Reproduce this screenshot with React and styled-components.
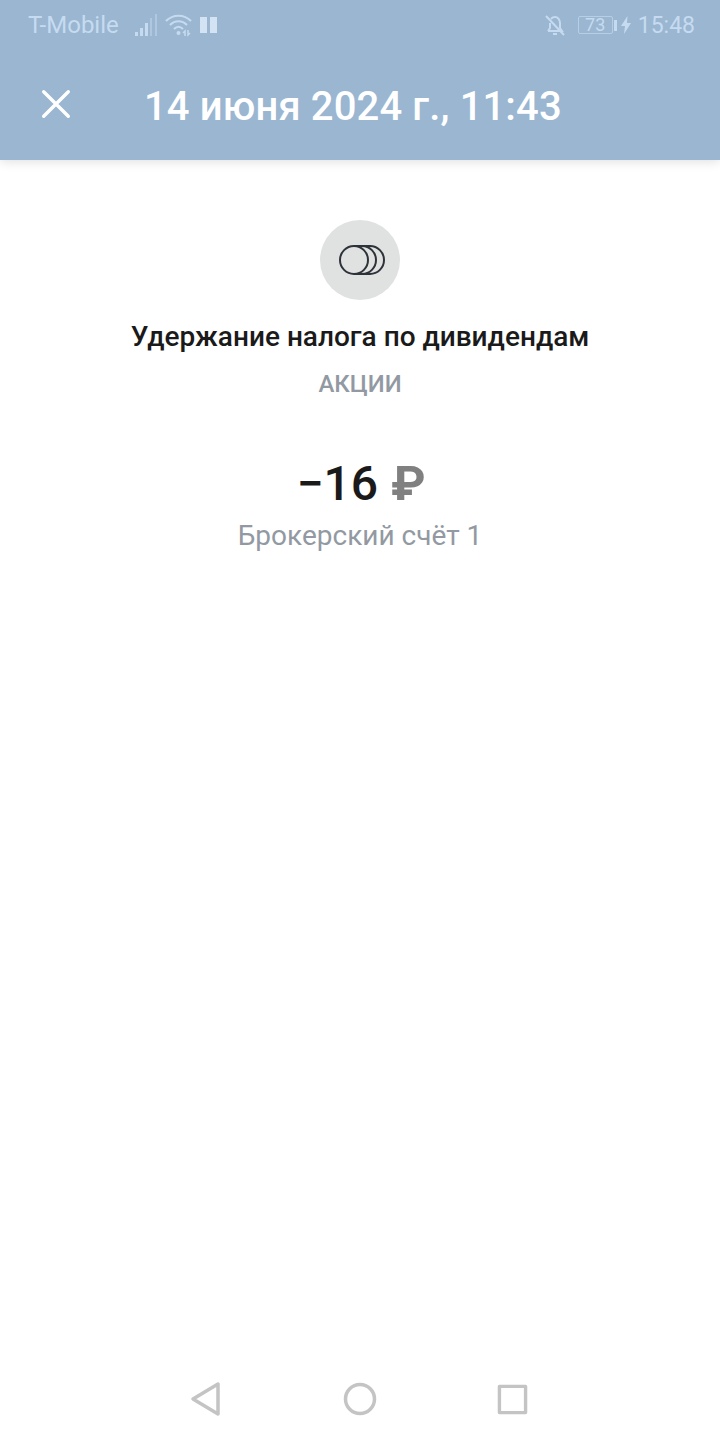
import React from 'react';
import styled, { createGlobalStyle } from 'styled-components';

const GlobalStyle = createGlobalStyle`
  html, body {
    margin: 0;
    padding: 0;
    background: #fff;
    font-family: Roboto, "Liberation Sans", sans-serif;
  }
`;

const Root = styled.div`
  width: 720px;
  height: 1440px;
  display: flex;
  flex-direction: column;
  background: #fff;
  overflow: hidden;
`;

const Header = styled.header`
  height: 160px;
  flex: none;
  background: #9ab6d1;
  box-shadow: 0 2px 10px rgba(0, 0, 0, 0.12);
  position: relative;
  z-index: 1;
`;

const StatusBar = styled.div`
  height: 50px;
  padding: 0 25px 0 28px;
  display: flex;
  align-items: center;
  color: #c6dbf0;
  font-size: 24px;
`;

const Carrier = styled.span`
  margin-right: 16px;
`;

const StatusRight = styled.div`
  margin-left: auto;
  display: flex;
  align-items: center;
`;

const BatteryBox = styled.div`
  width: 33px;
  height: 16px;
  border: 1.5px solid #b7cfe6;
  border-radius: 2px;
  font-size: 18px;
  line-height: 16px;
  text-align: center;
  margin-left: 11px;
`;

const BatteryCap = styled.div`
  width: 3px;
  height: 11px;
  background: #c6dbf0;
  margin-left: 1px;
`;

const Clock = styled.span`
  font-size: 23px;
`;

const Toolbar = styled.div`
  height: 110px;
  padding-bottom: 2px;
  box-sizing: border-box;
  display: flex;
  align-items: center;
  padding-left: 40px;
`;

const Title = styled.h1`
  margin: 4px 0 0 72px;
  color: #fff;
  font-size: 40px;
  font-weight: 500;
  letter-spacing: 0.13px;
`;

const Content = styled.main`
  flex: 1;
  display: flex;
  flex-direction: column;
  align-items: center;
  padding-top: 60px;
`;

const IconCircle = styled.div`
  width: 80px;
  height: 80px;
  border-radius: 50%;
  background: #e0e2e2;
  display: flex;
  align-items: center;
  justify-content: center;
`;

const OperationName = styled.div`
  margin-top: 20px;
  font-size: 28px;
  line-height: 34px;
  font-weight: 500;
  color: #1a1a1a;
`;

const Category = styled.div`
  margin-top: 16px;
  font-size: 24px;
  line-height: 28px;
  font-weight: 500;
  color: #9299a2;
`;

const Amount = styled.div`
  margin-top: 58px;
  padding-left: 2px;
  font-size: 48px;
  line-height: 56px;
  font-weight: 500;
  color: #1a1a1a;
  display: flex;
  align-items: center;
`;

const Currency = styled.span`
  color: #808080;
  margin-left: 13px;
  font-size: 49px;
  font-weight: 700;
`;

const Account = styled.div`
  margin-top: 7px;
  font-size: 28px;
  line-height: 34px;
  color: #9299a2;
`;

const NavBar = styled.nav`
  height: 59px;
  box-sizing: border-box;
  flex: none;
  display: flex;
  align-items: center;
  justify-content: center;
  gap: 120px;
  padding: 0 3px 23px 0;
`;

const App = () => {
  return (
    <Root>
      <GlobalStyle />
      <Header>
        <StatusBar>
          <Carrier>T-Mobile</Carrier>
          <svg width="24" height="24" viewBox="0 0 24 24">
            <rect x="0" y="19" width="3" height="4" fill="#c6dbf0" />
            <rect x="5" y="15" width="3" height="8" fill="#c6dbf0" />
            <rect x="10" y="10" width="3" height="13" fill="#c6dbf0" />
            <rect x="15" y="5" width="2" height="18" fill="#afc8df" />
            <rect x="20" y="1" width="2" height="22" fill="#afc8df" />
          </svg>
          <svg width="28" height="24" viewBox="0 0 28 24" fill="none" stroke="#c6dbf0" strokeWidth="2.2" style={{ marginLeft: 6 }}>
            <path d="M1 8C8 1 19 1 26 8" />
            <path d="M5 12C10 7 17 7 22 12" />
            <path d="M9 16C12 13 15 13 18 16" />
            <circle cx="13.5" cy="20" r="2" fill="#c6dbf0" stroke="none" />
            <path d="M20 23v-5l-2 2M23 17v5l2-2" strokeWidth="1.5" />
          </svg>
          <svg width="18" height="18" viewBox="0 0 18 18" style={{ marginLeft: 7 }}>
            <rect x="0" y="1" width="7" height="16" fill="#d3e3f3" />
            <rect x="10" y="1" width="7" height="16" fill="#d3e3f3" />
          </svg>
          <StatusRight>
            <svg width="24" height="24" viewBox="0 0 24 24" fill="none" stroke="#c6dbf0" strokeWidth="2">
              <path d="M5 18h14l-2-3v-5c0-3-2-6-5-6S9 5 8 6M7 10v5l-2 3" />
              <path d="M10 21h4M3 3l18 19" />
            </svg>
            <BatteryBox>73</BatteryBox>
            <BatteryCap />
            <svg width="12" height="20" viewBox="0 0 12 20" style={{ margin: '0 6px 0 3px' }}>
              <path d="M7.5 1L1 11h4l-1 8 7-11H7z" fill="#c6dbf0" />
            </svg>
            <Clock>15:48</Clock>
          </StatusRight>
        </StatusBar>
        <Toolbar>
          <svg width="32" height="32" viewBox="0 0 32 32" stroke="#fff" strokeWidth="3.4" strokeLinecap="round">
            <path d="M3.700 3.700L28.300 28.300M28.300 3.700L3.700 28.300" />
          </svg>
          <Title>14 июня 2024 г., 11:43</Title>
        </Toolbar>
      </Header>
      <Content>
        <IconCircle>
          <svg width="46" height="30" viewBox="0 0 46 30" fill="none" stroke="#2e333a" strokeWidth="2" style={{ marginLeft: 3 }}>
            <circle cx="15" cy="15" r="14" />
            <path d="M15 1h8a14 14 0 0 1 0 28h-8" />
            <path d="M23 1h8a14 14 0 0 1 0 28h-8" />
          </svg>
        </IconCircle>
        <OperationName>Удержание налога по дивидендам</OperationName>
        <Category>АКЦИИ</Category>
        <Amount>
          −16
          <Currency>₽</Currency>
        </Amount>
        <Account>Брокерский счёт 1</Account>
      </Content>
      <NavBar>
        <svg width="34" height="36" viewBox="0 0 34 36" fill="none" stroke="#c4c4c4" strokeWidth="3.5" strokeLinejoin="round">
          <path d="M29 3V33L4 18Z" />
        </svg>
        <svg width="34" height="34" viewBox="0 0 34 34" fill="none" stroke="#c4c4c4" strokeWidth="3.5">
          <circle cx="17" cy="17" r="14.500" />
        </svg>
        <svg width="31" height="31" viewBox="0 0 32 32" fill="none" stroke="#c4c4c4" strokeWidth="3.500" strokeLinejoin="round">
          <rect x="2.500" y="2.500" width="27" height="27" />
        </svg>
      </NavBar>
    </Root>
  );
};

export default App;
